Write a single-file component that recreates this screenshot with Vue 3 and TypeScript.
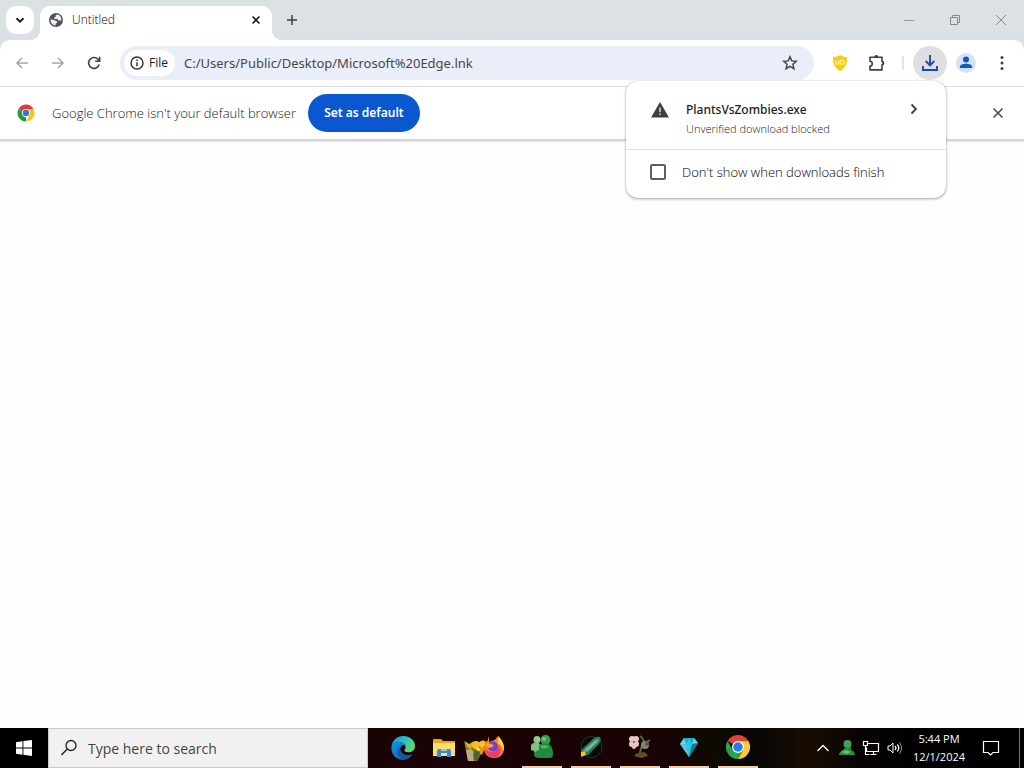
<script setup lang="ts">
import { ref } from 'vue'

const search = ref('')
const address = ref('C:/Users/Public/Desktop/Microsoft%20Edge.lnk')
const hideWhenFinished = ref(false)
</script>

<template>
  <div class="desktop">
    <header class="titlebar">
      <button class="tab-search" aria-label="Search tabs">
        <svg width="12" height="12" viewBox="0 0 12 12"><path d="M2.5 4.2 6 7.7l3.5-3.5" fill="none" stroke="#202124" stroke-width="2" /></svg>
      </button>
      <div class="tab">
        <svg width="14" height="14" viewBox="0 0 14 14">
          <circle cx="7" cy="7" r="7" fill="#50545a" />
          <path d="M8.4 1.5 6.7 2.2v1.6L5.2 4.7v1.4h3.2l1 1.3h2.9C12.8 4.5 11 2 8.4 1.5ZM1.6 6.2c-.3 3 1.7 6 5 6.3v-1.8l1.4-1V8.300L5.400 7.200Z" fill="#eef0f4" />
        </svg>
        <span class="tab-title">Untitled</span>
        <button class="tab-close" aria-label="Close tab">
          <svg width="10" height="10" viewBox="0 0 10 10"><path d="m1.500 1.500 7 7m0-7-7 7" stroke="#202124" stroke-width="1.700" /></svg>
        </button>
      </div>
      <button class="new-tab" aria-label="New tab">
        <svg width="12" height="12" viewBox="0 0 12 12"><path d="M6 1v10M1 6h10" stroke="#3c4043" stroke-width="1.500" /></svg>
      </button>
      <div class="window-controls">
        <button aria-label="Minimize"><svg width="12" height="12" viewBox="0 0 12 12"><path d="M1 6.500h10" stroke="#94989b" /></svg></button>
        <button aria-label="Restore"><svg width="12" height="12" viewBox="0 0 12 12"><path d="M1.500 3.500h7v7h-7zM3.500 3.500v-2h7v7h-2" fill="none" stroke="#85898c" /></svg></button>
        <button aria-label="Close"><svg width="12" height="12" viewBox="0 0 12 12"><path d="m1 1 10 10m0-10L1 11" stroke="#85898c" /></svg></button>
      </div>
    </header>

    <nav class="toolbar">
      <button aria-label="Back"><svg width="14" height="14" viewBox="0 0 14 14"><path d="M13 7H2m5-5L2 7l5 5" fill="none" stroke="#a4a7aa" stroke-width="1.500" /></svg></button>
      <button aria-label="Forward"><svg width="14" height="14" viewBox="0 0 14 14"><path d="M1 7h11M7 2l5 5-5 5" fill="none" stroke="#a4a7aa" stroke-width="1.500" /></svg></button>
      <button aria-label="Reload"><svg width="16" height="16" viewBox="0 0 16 16"><path d="M13.200 9.500A5.400 5.400 0 1 1 12 4.300L13.500 6M13.600 1.800V6.200H9.200" fill="none" stroke="#3c4043" stroke-width="1.600" /></svg></button>
      <div class="omnibox">
        <button class="site-chip">
          <svg width="14" height="14" viewBox="0 0 14 14"><circle cx="7" cy="7" r="6" fill="none" stroke="#303236" stroke-width="1.400" /><path d="M7 6.200v4M7 3.500V5" stroke="#303236" stroke-width="1.500" /></svg>
          <span>File</span>
        </button>
        <input v-model="address" class="address" type="text" aria-label="Address" />
        <button class="bookmark" aria-label="Bookmark this page">
          <svg width="16" height="16" viewBox="0 0 16 16"><path d="m8 1.700 1.800 4.200 4.600.4-3.500 3 1.100 4.500L8 11.400l-4 2.400 1.100-4.500-3.500-3 4.600-.4Z" fill="none" stroke="#3c4043" stroke-width="1.400" /></svg>
        </button>
      </div>
      <button aria-label="Ad blocker">
        <svg width="16" height="16" viewBox="0 0 16 16"><path d="M8 0c2.400 1.500 4.500 2 7 2.200C15 8.500 13.500 13 8 16 2.500 13 1 8.500 1 2.200 3.500 2 5.600 1.500 8 0Z" fill="#f7cf08" /><path d="M4 5.200v3q0 1 1.300 1t1.300-1v-3" fill="none" stroke="#fff3a8" stroke-width="1.200" /><circle cx="10" cy="7.200" r="2" fill="none" stroke="#fff3a8" stroke-width="1.200" /></svg>
      </button>
      <button aria-label="Extensions">
        <svg width="18" height="18" viewBox="0 0 18 18"><path d="M3 3.200h12v4.300c2 .1 2 3.300 0 3.400v5H3v-3.800c3-.2 3-4.600 0-4.800Z" fill="none" stroke="#3c4043" stroke-width="1.600" stroke-linejoin="round" /><path d="M7.300 3a2 2 0 0 1 4 0ZM15.300 7.300a2 2 0 0 1 0 4Z" fill="#3c4043" /></svg>
      </button>
      <span class="divider"></span>
      <button class="download" aria-label="Downloads">
        <span><svg width="18" height="18" viewBox="0 0 18 18"><path d="M9 1v10M4.700 7 9 11.300 13.300 7M2 12v4h14v-4" fill="none" stroke="#174ea6" stroke-width="1.900" /></svg></span>
      </button>
      <button aria-label="Profile">
        <svg width="20" height="20" viewBox="0 0 20 20"><circle cx="10" cy="10" r="10" fill="#d3e3fd" /><circle cx="10" cy="6.600" r="3" fill="#1557c0" /><path d="M4 15v-1.500c0-3.800 12-3.800 12 0V15Z" fill="#1557c0" /></svg>
      </button>
      <button aria-label="Menu"><svg width="4" height="16" viewBox="0 0 4 16" fill="#3c4043"><circle cx="2" cy="2.500" r="1.500" /><circle cx="2" cy="8" r="1.500" /><circle cx="2" cy="13.500" r="1.500" /></svg></button>

      <section class="bubble" aria-label="Recent downloads">
        <button class="download-row">
          <svg class="warning" width="18" height="16" viewBox="0 0 18 16"><path d="M9 0 18 15.500H0Z" fill="#3c4043" /><path d="M9 5.500v4.700M9 11.400v1.700" stroke="#d8d8d8" stroke-width="1.500" /></svg>
          <span class="download-text">
            <span class="file">PlantsVsZombies.exe</span>
            <span class="status">Unverified download blocked</span>
          </span>
          <svg class="arrow" width="10" height="12" viewBox="0 0 10 12"><path d="m2.500 1.500 4.500 4.500-4.500 4.500" fill="none" stroke="#3c4043" stroke-width="1.800" /></svg>
        </button>
        <label class="option">
          <input v-model="hideWhenFinished" type="checkbox" />
          <span>Don't show when downloads finish</span>
        </label>
      </section>
    </nav>

    <div class="infobar">
      <svg width="18" height="18" viewBox="0 0 48 48">
        <path d="M24 24 4.500 12.700A22.500 22.500 0 0 1 43.500 12.700Z" fill="#e33b2e" />
        <path d="M24 24v22.500A22.500 22.500 0 0 1 4.500 12.700Z" fill="#279847" />
        <path d="M24 13h19.600l.5 1A22.500 22.500 0 0 1 24 46.500L33.500 30Z" fill="#fbc116" />
        <circle cx="24" cy="24" r="11" fill="#fff" /><circle cx="24" cy="24" r="8.500" fill="#3574df" />
      </svg>
      <span class="notice">Google Chrome isn't your default browser</span>
      <button class="primary">Set as default</button>
      <button class="dismiss" aria-label="Dismiss"><svg width="12" height="12" viewBox="0 0 12 12"><path d="m1.500 1.500 9 9m0-9-9 9" stroke="#45484c" stroke-width="1.500" /></svg></button>
    </div>

    <main class="page"></main>

    <footer class="taskbar">
      <button class="start" aria-label="Start"><svg width="16" height="16" viewBox="0 0 16 16" fill="#fff"><path d="m0 2.200 6.500-.9v6.300H0ZM7.400 1.100 16 0v7.600H7.400ZM0 8.500h6.500v6.200L0 13.800ZM7.400 8.500H16V16l-8.600-1.200Z" /></svg></button>
      <label class="search">
        <svg width="18" height="18" viewBox="0 0 18 18"><circle cx="11" cy="6.500" r="5" fill="none" stroke="#222" stroke-width="1.300" /><path d="m7.400 10.100-6 6" stroke="#222" stroke-width="1.400" /></svg>
        <input v-model="search" type="text" placeholder="Type here to search" aria-label="Type here to search" />
      </label>
      <div class="pinned">
        <button aria-label="Microsoft Edge">
          <svg width="24" height="24" viewBox="0 0 24 24">
            <defs>
              <linearGradient id="edge-top" x1="0" y1="0" x2="1" y2="0.500"><stop offset="0" stop-color="#168fd8" /><stop offset="0.550" stop-color="#2bbfc7" /><stop offset="1" stop-color="#63d867" /></linearGradient>
              <linearGradient id="edge-base" x1="0" y1="0" x2="1" y2="1"><stop offset="0" stop-color="#1793e0" /><stop offset="1" stop-color="#0c55a6" /></linearGradient>
            </defs>
            <path d="M.5 11C1 4.500 6 0 12.200 0 19 0 24 4.800 24 10c0 4-3 6.300-6.400 6.300-2.800 0-4.200-1-4.200-2 0-1 1.200-1.400 1.200-3.300C14.600 8 11 6 7.500 6 3.500 6 .8 8.500.5 11Z" fill="url(#edge-top)" />
            <path d="M.3 12C.5 8 4 5.700 7.500 5.700c3 0 5.700 1.300 6.700 3.400C10 8.500 8.500 12 9.600 15c1.400 3.700 6.500 5.400 11.800 3.200C17.500 25.500 6.500 26 2 18.500A12 12 0 0 1 .3 12Z" fill="url(#edge-base)" />
            <path d="M9.500 11c-3 4.500 1.500 11 11.500 7.500-2.800 4.500-8.500 5-11 3.500-5-2.800-4.500-8.500-.5-11Z" fill="#1557a1" />
          </svg>
        </button>
        <button aria-label="File Explorer"><svg width="22" height="18" viewBox="0 0 22 18"><path d="M0 1q0-1 1-1h7l2 2h11q1 0 1 1v14H0Z" fill="#e5a81e" /><path d="M0 4h22v13H0Z" fill="#ffdc6d" /><path d="M4 18v-6q0-2 2-2h10q2 0 2 2v6h-4v-4H8v4Z" fill="#368cc9" /><path d="M8 10h6v2H8Z" fill="#91c6e4" /></svg></button>
        <button aria-label="Firefox">
          <svg width="41" height="26" viewBox="0 0 41 26">
            <path d="m0 6 5 4 4-4 2 7 5 1 1 5-4 7H4Z" fill="#8d7434" /><path d="m1 6 4 3 4-2-2 7-4-2Z" fill="#dcb326" /><path d="m2 15 5-1 4 5-1 7H4Z" fill="#b9ae83" /><circle cx="12" cy="10" r="4" fill="#f6bd27" /><path d="m15 8 4-3 4 2 2-6v10l-4 2-3 7-6-4 4-3Z" fill="#e99413" /><path d="m9 19 3-5 4 3-1 7-5 2Z" fill="#526324" /><circle cx="18" cy="9" r="3" fill="#f9c331" /><circle cx="14" cy="14" r="2" fill="#ffd944" />
            <path d="M34 1c3 3 6 7 6 12 0 7-5 10-10 10-6 0-10-4-10-10 0-3 1-5 3-7v3l4-3c3 0 5-2 7-5Z" fill="#ff7b38" /><path d="M21 14c2 2 4 3 7 3 4 0 7-3 7-7 2 4 2 7 0 10-5 5-13 2-14-6Z" fill="#ef3c6c" /><path d="M34 1c4 4 7 9 5.500 15-1-4-3-6-6-8 1-2 1-5 .5-7Z" fill="#ffda3b" /><circle cx="29" cy="11.500" r="5" fill="#7640c8" /><path d="m22 8 6 1 2 2-4 2-4-1Z" fill="#ff9c36" />
          </svg>
        </button>
      </div>
      <div class="running">
        <button aria-label="Messenger"><svg width="24" height="24" viewBox="0 0 24 24"><circle cx="7" cy="4.500" r="3.500" fill="#8dcd8f" /><path d="M1 10q3-4 8-2l2 3v8l-6 1-1-4-3-1Z" fill="#7dc284" /><circle cx="15.500" cy="5" r="5" fill="#379d4d" /><path d="M9 10q5-3 10-1 4 3 4 10 0 4-3 4H9q-5 0-5-4 0-2 5-4Z" fill="#218a3c" /><path d="M10 11q6-2 9 1l-6 2Z" fill="#5db367" /><circle cx="14" cy="4" r="2" fill="#72c176" /></svg></button>
        <button aria-label="Rocket"><svg width="24" height="24" viewBox="0 0 24 24"><circle cx="12.500" cy="12" r="10.500" fill="#060b09" stroke="#24372f" /><path d="m2 15 13-12q3-2 6-1 2 3-1 7L9 20H3Z" fill="#287c56" /><path d="m5 15 11-10 4-1-2 4L8 17Z" fill="#72b391" /><path d="m2 17 4-1 1 4-5 2Z" fill="#eec71c" /></svg></button>
        <button aria-label="Plants game"><svg width="24" height="24" viewBox="0 0 24 24"><path d="M12 1q7 5 1 12l-2 9M22 5q-8 4-10 12" fill="none" stroke="#51633d" stroke-width="2" /><g fill="#e9c5c4"><circle cx="4" cy="4" r="3" /><circle cx="8" cy="4" r="3" /><circle cx="4" cy="9" r="3" /><circle cx="8" cy="9" r="3" /><circle cx="6" cy="12" r="2" /></g><circle cx="6" cy="7" r="1" fill="#7e5142" /><circle cx="17" cy="10" r="4" fill="#858471" /><circle cx="19" cy="9" r="2" fill="#525a46" /><path d="M6 21q3-5 6-2 4-5 8 2l-7 2Z" fill="#684b25" /></svg></button>
        <button aria-label="Diamond"><svg width="24" height="24" viewBox="0 0 24 24"><path d="m7 3 10 0 4 5-9 14L3 9Z" fill="#1ba9c5" /><path d="m7 3 2 6-6 0ZM17 3l-2 6 6-1Z" fill="#64d8ea" /><path d="m9 9 3-6 3 6-3 13Z" fill="#28c8e4" /><path d="m3 9 6 0 3 13Z" fill="#55c4dc" /><path d="m15 9 6-1-9 14Z" fill="#087f9f" /></svg></button>
        <button aria-label="Google Chrome">
          <svg width="24" height="24" viewBox="0 0 48 48"><path d="M24 24 3.200 12A24 24 0 0 1 44.800 12Z" fill="#e34133" /><path d="M3.200 12A24 24 0 0 0 24 48l10.400-18L24 24 13.600 30Z" fill="#2ba24c" /><path d="M24 12h20.800A24 24 0 0 1 24 48l10.400-18Z" fill="#ffcb2d" /><circle cx="24" cy="24" r="12" fill="#fff" /><circle cx="24" cy="24" r="9.500" fill="#2979e8" /></svg>
        </button>
      </div>
      <div class="tray">
        <button aria-label="Show hidden icons"><svg width="14" height="10" viewBox="0 0 14 10"><path d="m1.500 8 5.500-5.500L12.500 8" fill="none" stroke="#fff" stroke-width="1.300" /></svg></button>
        <button aria-label="Messenger status"><svg width="16" height="16" viewBox="0 0 16 16"><circle cx="8.500" cy="4" r="4" fill="#43a35a" /><path d="M0 15q0-3 4-5l3-3h5q-1 3 2 4 2 2 2 4Z" fill="#2b8c42" /><path d="m2 12 5-2 5 2-4 2Z" fill="#74bb74" /></svg></button>
        <button aria-label="Network"><svg width="18" height="16" viewBox="0 0 18 16"><path d="M5.500 3.500h11v8h-12v-4M8.500 14.500h6m-3-3v3M1.500 1.500h4v4h-4zM3.500 5.500v9h4" fill="none" stroke="#fff" stroke-width="1.200" /></svg></button>
        <button aria-label="Volume"><svg width="16" height="14" viewBox="0 0 16 14"><path d="M1 5h2l3-3v10L3 9H1Z" fill="none" stroke="#fff" /><path d="M8 5q2 2 0 4M10.300 3.500q3 3.500 0 7" fill="none" stroke="#fff" stroke-width="1.200" /><path d="M12.500 1.500q4 5.500 0 11" fill="none" stroke="#999" /></svg></button>
        <button class="clock"><span>5:44 PM</span><span>12/1/2024</span></button>
        <button class="notifications" aria-label="Notifications"><svg width="18" height="18" viewBox="0 0 18 18"><path d="M1.500 2.500h15v11H11l-2.500 2.500L6 13.500H1.500Z" fill="none" stroke="#fff" stroke-width="1.200" /></svg></button>
        <button class="show-desktop" aria-label="Show desktop"></button>
      </div>
    </footer>
  </div>
</template>

<style>
body {
  margin: 0;
  background: #fff;
}
</style>

<style scoped>
.desktop {
  min-height: 100vh;
  display: flex;
  flex-direction: column;
  background: #dce1e6;
  color: #202124;
  font: 12px/18px "Noto Sans", "Open Sans", sans-serif;
}
* {
  box-sizing: border-box;
}
button {
  display: flex;
  align-items: center;
  justify-content: center;
  flex-shrink: 0;
  padding: 0;
  border: 0;
  background: none;
  color: inherit;
  font: inherit;
}
input {
  min-width: 0;
  margin: 0;
  font: inherit;
}
svg {
  display: block;
  flex-shrink: 0;
}
.titlebar {
  display: flex;
  height: 40px;
  padding-left: 6px;
  background: linear-gradient(#dce2e4 60%, #dbdfe8);
}
.tab-search {
  width: 28px;
  height: 28px;
  margin-top: 6px;
  border-radius: 10px;
  background: #fff;
}
.tab {
  position: relative;
  display: flex;
  align-items: center;
  width: 232px;
  height: 34px;
  margin: 6px 0 0 6px;
  padding: 0 6px 6px 9px;
  border-radius: 10px 10px 0 0;
  background: #fff;
}
.tab::before,
.tab::after {
  content: "";
  position: absolute;
  bottom: 0;
  width: 10px;
  height: 10px;
}
.tab::before {
  right: 100%;
  background: radial-gradient(circle at 0 0, transparent 10px, #fff 10px);
}
.tab::after {
  left: 100%;
  background: radial-gradient(circle at 100% 0, transparent 10px, #fff 10px);
}
.tab-title,
.notice,
.option,
.status {
  font-family: "Open Sans", sans-serif;
  font-weight: 300;
}
.tab-title {
  flex: 1;
  margin-left: 9px;
  color: #000;
}
.tab-close {
  width: 20px;
  height: 20px;
}
.new-tab {
  width: 28px;
  height: 28px;
  margin: 6px 0 0 6px;
}
.window-controls {
  display: flex;
  margin-left: auto;
}
.window-controls button {
  width: 46px;
  height: 40px;
}
.toolbar {
  position: relative;
  z-index: 2;
  display: flex;
  align-items: center;
  height: 47px;
  padding: 0 4px;
  border-bottom: 1px solid #dcdee0;
  border-radius: 10px 10px 0 0;
  background: #fff;
}
.toolbar > button {
  width: 36px;
  height: 36px;
}
.omnibox {
  display: flex;
  align-items: center;
  flex: 1;
  min-width: 0;
  height: 34px;
  margin: 0 8px;
  padding: 0 8px 0 4px;
  border-radius: 17px;
  background: #e9eef8;
}
.site-chip {
  gap: 5px;
  height: 26px;
  padding: 0 7px 0 6px;
  border-radius: 13px;
  background: #fff;
  font-family: "Open Sans", sans-serif;
  font-weight: 500;
}
.address {
  flex: 1;
  padding: 0 0 0 9px;
  border: 0;
  background: transparent;
  color: #44474b;
  font-size: 13px;
}
.bookmark {
  width: 32px;
  height: 32px;
}
.divider {
  width: 2px;
  height: 14px;
  margin: 0 8px;
  background: #e2e4e8;
}
.download span {
  display: grid;
  place-items: center;
  width: 34px;
  height: 34px;
  border-radius: 50%;
  background: #dfdfe3;
}
.bubble {
  position: absolute;
  top: 41px;
  right: 78px;
  width: 320px;
  border-radius: 12px;
  background: #fff;
  box-shadow: 0 1px 3px rgba(0, 0, 0, 0.35), 0 0 1px rgba(0, 0, 0, 0.3);
}
.download-row {
  align-items: flex-start;
  justify-content: flex-start;
  width: 100%;
  height: 69px;
  padding: 19px 27px 0 25px;
  border-bottom: 1px solid #dcdee0;
  text-align: left;
}
.warning {
  margin-top: 2px;
}
.download-text {
  display: flex;
  flex: 1;
  flex-direction: column;
  margin-left: 17px;
}
.file {
  font-weight: 500;
  line-height: 20px;
}
.status {
  color: #202124;
  font-size: 11px;
  line-height: 18px;
}
.arrow {
  margin-top: 3px;
}
.option {
  display: flex;
  align-items: center;
  gap: 16px;
  height: 48px;
  padding: 0 24px 4px;
  color: #000;
  font-size: 13px;
}
.option input {
  appearance: none;
  width: 16px;
  height: 16px;
  border: 2px solid #5c6064;
  border-radius: 2px;
}
.option input:checked {
  background: #0b57d0;
}
.infobar {
  position: relative;
  z-index: 1;
  display: flex;
  align-items: center;
  height: 53px;
  padding: 0 16px 0 17px;
  border-bottom: 1px solid #d4d4d4;
  background: #fff;
  box-shadow: 0 1px 2px rgba(0, 0, 0, 0.25);
}
.notice {
  margin-left: 17px;
  color: #202124;
  font-size: 13px;
}
.primary {
  height: 38px;
  min-width: 112px;
  margin-left: 12px;
  padding: 0 16px;
  border-radius: 19px;
  background: #0b57d0;
  color: #fff;
  font-weight: 600;
}
.dismiss {
  width: 20px;
  height: 20px;
  margin-left: auto;
}
.page {
  flex: 1;
  background: #fefefe;
}
.taskbar {
  display: flex;
  height: 40px;
  background: linear-gradient(90deg, #000 5%, #190305 36%, #1a0305 64%, #0d0a03 70%, #070604 74%, #180d02 79%, #080303 84%, #000 90%);
  color: #fff;
  font-family: "Open Sans", sans-serif;
}
.start {
  width: 48px;
}
.search {
  display: flex;
  align-items: center;
  flex: 0 1 320px;
  min-width: 0;
  padding: 0 11px;
  border: 1px solid #c9c9c9;
  background: #f1f1f1;
}
.search input {
  flex: 1;
  padding: 2px 0 0 10px;
  border: 0;
  background: transparent;
  color: #333;
  font-size: 14px;
}
.search input::placeholder {
  color: #444;
  opacity: 1;
}
.pinned {
  display: flex;
  margin-left: 14px;
}
.pinned button {
  width: 41px;
}
.running {
  display: flex;
  gap: 9px;
  margin-left: 17px;
}
.running button {
  width: 40px;
  border-bottom: 2px solid #f7cf9c;
}
.tray {
  display: flex;
  margin-left: auto;
}
.tray button {
  width: 24px;
}
.tray .clock {
  flex-direction: column;
  width: 64px;
  font-size: 11px;
}
.tray .notifications {
  width: 40px;
  margin-right: 8px;
}
.tray .show-desktop {
  width: 5px;
  border-left: 1px solid #777;
}
</style>
